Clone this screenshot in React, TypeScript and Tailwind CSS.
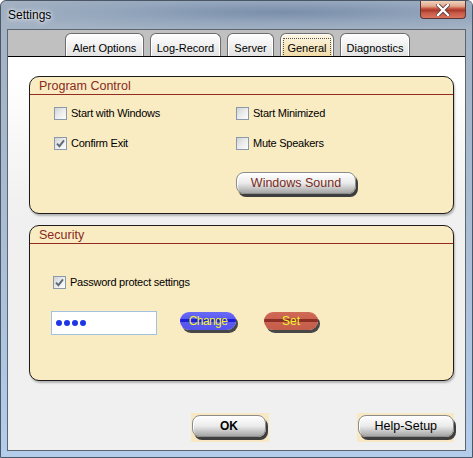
import React from "react";

function CheckBox({ checked, label }: { checked?: boolean; label: string }) {
  return (
    <div className="flex items-center h-[13px]">
      <span className="w-[13px] h-[13px] shrink-0 border border-[#8a9aab] bg-linear-to-br from-[#d2d2d2] via-[#ececec] to-[#fdfdfd] flex items-center justify-center">
        {checked && (
          <svg width="9" height="9" viewBox="0 0 9 9">
            <path d="M1 4.6 L3.4 7.2 L8 1.4" stroke="#5d6a78" strokeWidth="1.9" fill="none" />
          </svg>
        )}
      </span>
      <span className="ml-[4px] text-[11px] leading-[13px] tracking-[-0.25px] text-black whitespace-nowrap">{label}</span>
    </div>
  );
}

function Tab({ label, w, active }: { label: string; w: string; active?: boolean }) {
  return (
    <div
      className={`${w} h-[23px] rounded-t-[6px] border border-b-0 border-[#6d6d6d] shadow-[inset_1px_1px_0_#fff,inset_-1px_0_0_#fff] flex justify-center pt-[7px] text-[11px] leading-[14px] text-black whitespace-nowrap ${
        active ? "bg-linear-to-b from-[#fdf6e4] to-[#f1dca8]" : "bg-linear-to-b from-white to-[#e2e2e2]"
      }`}
    >
      <span className={active ? "outline-1 outline-dotted outline-[#555] outline-offset-[2px] px-[1px]" : ""}>{label}</span>
    </div>
  );
}

function Group({ title, h, children }: { title: string; h: string; children: React.ReactNode }) {
  return (
    <div className={`${h} rounded-[10px] border border-[#1c1c1c] bg-[#f9ebc2] shadow-[1px_2px_2px_rgba(0,0,0,0.25)] flex flex-col`}>
      <div className="h-[18px] border-b border-[#952c22] flex items-center pl-[9px] text-[12.5px] leading-[16px] text-[#8a2a22]">
        {title}
      </div>
      {children}
    </div>
  );
}

function GrayButton({ children, w, bold, textColor }: { children: React.ReactNode; w: string; bold?: boolean; textColor: string }) {
  return (
    <div
      className={`${w} h-[22px] rounded-[8px] border border-[#8c8c8c] bg-linear-to-b from-white via-[#ebebeb] to-[#a6a6a6] shadow-[inset_1px_1px_0_#fff,2px_3px_0_#3e3e3e] flex items-center justify-center text-[12.5px] leading-[14px] ${textColor} ${
        bold ? "font-bold text-[12px]" : ""
      }`}
    >
      {children}
    </div>
  );
}

export default function App() {
  return (
    <div className="w-[473px] h-[458px] font-['Liberation_Sans',Arial,sans-serif] rounded-t-[6px] border border-[#4b5767] bg-linear-to-b from-[#a3b1c2] via-[#a9bdd4] to-[#b3cdeb] flex flex-col px-[6px] pb-[6px]">
      {/* title bar */}
      <div className="h-[28px] shrink-0 flex justify-between bg-[radial-gradient(ellipse_at_60%_40%,#7a8eab_0%,#95a7bd_45%,transparent_80%)] -mx-[6px] px-[6px]">
        <span className="self-center pl-[1px] text-[12px] text-black [text-shadow:0_0_6px_#fff,0_0_3px_#fff]">Settings</span>
        <div className="w-[46px] h-[18px] rounded-b-[4px] border border-t-0 border-[#5a3634] bg-[linear-gradient(to_bottom,#f1d2bd_0%,#e3a98e_30%,#c5533f_45%,#a7382b_55%,#c85a47_70%,#d9745f_100%)] flex items-center justify-center">
          <svg width="14" height="12" viewBox="0 0 14 12">
            <path d="M2 1 L12 11 M12 1 L2 11" stroke="#5a3a3a" strokeWidth="4" strokeLinecap="square" />
            <path d="M2 1 L12 11 M12 1 L2 11" stroke="#fff" strokeWidth="2.4" strokeLinecap="square" />
          </svg>
        </div>
      </div>

      {/* client */}
      <div className="flex-1 border border-[#5d6570] bg-[#c0c0c0] flex flex-col">
        <div className="h-[26px] shrink-0 flex items-end pl-[57px] gap-[6px]">
          <Tab label="Alert Options" w="w-[79px]" />
          <Tab label="Log-Record" w="w-[71px]" />
          <Tab label="Server" w="w-[47px]" />
          <Tab label="General" w="w-[54px]" active />
          <Tab label="Diagnostics" w="w-[70px]" />
        </div>

        <div className="flex-1 border-t border-black bg-linear-to-b from-white from-5% to-[#f0f0f0] to-40% flex flex-col pl-[21px] pr-[11px] pt-[19px]">
          <Group title="Program Control" h="h-[138px]">
            <div className="pl-[24px] pt-[12px] flex flex-col">
              <div className="grid grid-cols-[182px_1fr] gap-y-[17px]">
                <CheckBox label="Start with Windows" />
                <CheckBox label="Start Minimized" />
                <CheckBox label="Confirm Exit" checked />
                <CheckBox label="Mute Speakers" />
              </div>
              <div className="ml-[182px] mt-[22px]">
                <GrayButton w="w-[120px]" textColor="text-[#7a2a20]">Windows Sound</GrayButton>
              </div>
            </div>
          </Group>

          <div className="mt-[11px]">
            <Group title="Security" h="h-[156px]">
              <div className="pl-[21px] pt-[32px] flex flex-col">
                <div className="ml-[2px]">
                  <CheckBox label="Password protect settings" checked />
                </div>
                <div className="mt-[22px] flex items-start">
                  <div className="w-[106px] h-[24px] border border-[#a3c2df] bg-white flex items-center pl-[4px] gap-[2px]">
                    {[0, 1, 2, 3].map((i) => (
                      <span key={i} className="w-[6px] h-[6px] rounded-full bg-[#1f36e6]" />
                    ))}
                  </div>
                  <div className="ml-[23px] mt-[1px] w-[56px] h-[18px] rounded-full bg-[linear-gradient(to_bottom,#6a6af8_0%,#5a5af2_38%,#1f1fd8_38%,#1f1fd8_58%,#5a5af2_58%,#5555ee_100%)] shadow-[2px_3px_0_#474747] flex items-center justify-center text-[12px] leading-[14px] tracking-[-0.6px] text-[#f4f430]">
                    Change
                  </div>
                  <div className="ml-[28px] mt-[1px] w-[54px] h-[18px] rounded-full bg-[linear-gradient(to_bottom,#d06b58_0%,#c9624f_38%,#8c2f25_38%,#8c2f25_58%,#c9624f_58%,#c45c4a_100%)] shadow-[2px_3px_0_#474747] flex items-center justify-center text-[12px] leading-[14px] text-[#f4f430]">
                    Set
                  </div>
                </div>
              </div>
            </Group>
          </div>

          <div className="mt-[32px] flex">
            <div className="ml-[162px] w-[80px] h-[29px] bg-[#f8e9c4] pl-[1px] pt-[2px]">
              <GrayButton w="w-[74px]" bold textColor="text-black">OK</GrayButton>
            </div>
            <div className="ml-[88px] w-[100px] h-[29px] bg-[#f8e9c4] pl-[1px] pt-[2px]">
              <GrayButton w="w-[96px]" textColor="text-black">Help-Setup</GrayButton>
            </div>
          </div>
        </div>
      </div>
    </div>
  );
}
